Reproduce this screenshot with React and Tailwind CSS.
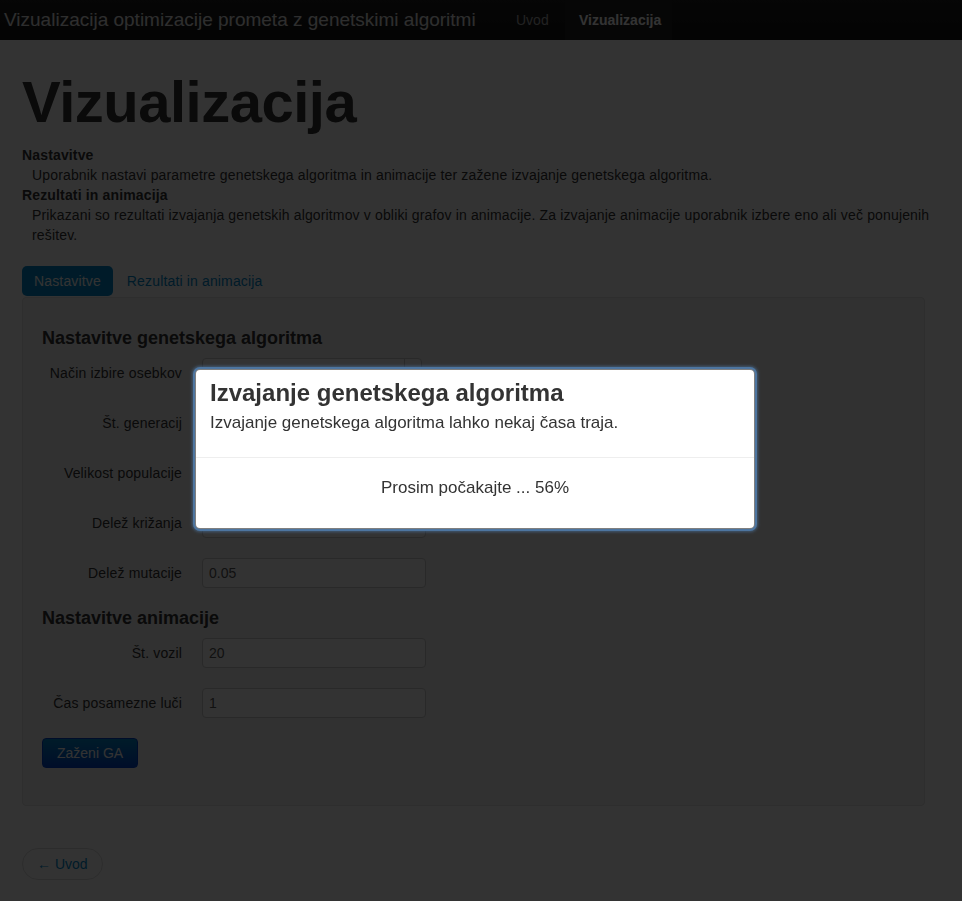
import React from 'react';

const font = { fontFamily: '"Liberation Sans", Arial, sans-serif' };

const genetic = [
  { label: 'Način izbire osebkov', value: 'Turnirska selekcija', select: true },
  { label: 'Št. generacij', value: '100' },
  { label: 'Velikost populacije', value: '50' },
  { label: 'Delež križanja', value: '0.8' },
  { label: 'Delež mutacije', value: '0.05' },
];

const animation = [
  { label: 'Št. vozil', value: '20' },
  { label: 'Čas posamezne luči', value: '1' },
];

const Field = ({ label, value, select }) => (
  <div className="flex items-start">
    <label className="w-[140px] pt-[5px] text-right text-[14px] leading-[20px] tracking-[0.15px] text-[#333]">{label}</label>
    {select ? (
      <div className="ml-[20px] flex h-[30px] w-[220px] items-center rounded-[4px] border border-[#ccc] bg-white text-[14px] text-[#333]">
        <span className="flex-1 px-[6px]">{value}</span>
        <span className="flex h-full w-[17px] items-center justify-center border-l border-[#ccc] text-[8px]">▼</span>
      </div>
    ) : (
      <input
        readOnly
        value={value}
        className="ml-[20px] h-[30px] w-[224px] rounded-[4px] border border-[#ccc] bg-white px-[6px] text-[14px] text-[#555] outline-none"
      />
    )}
  </div>
);

const Section = ({ title, fields }) => (
  <div className="flex flex-col">
    <h3 className="text-[18px] font-bold leading-[40px] text-[#333]">{title}</h3>
    <div className="flex flex-col gap-[20px]">
      {fields.map((f) => (
        <Field key={f.label} {...f} />
      ))}
    </div>
  </div>
);

export default function App() {
  return (
    <div className="min-h-[901px] bg-white text-[14px] text-[#333]" style={font}>
      {/* navbar */}
      <div className="flex h-[40px] items-center bg-gradient-to-b from-[#1e1e1e] to-[#141414]">
        <span className="w-[501px] pl-[4px] text-[19px] font-light text-[#e6e6e6]">
          Vizualizacija optimizacije prometa z genetskimi algoritmi
        </span>
        <nav className="flex h-full items-stretch">
          <a className="flex w-[64px] items-center pl-[15px] text-[14px] text-[#aaa]">Uvod</a>
          <a className="flex w-[107px] items-center bg-[#1f1f1f] pl-[14px] text-[14px] font-bold text-white">Vizualizacija</a>
        </nav>
      </div>

      <div className="px-[22px]">
        <h1 className="mt-[27px] mb-[8px] text-[58px] font-bold leading-[70px] tracking-[-0.5px] text-[#333]">
          Vizualizacija
        </h1>

        <dl className="leading-[20px] tracking-[0.15px]">
          <dt className="font-bold">Nastavitve</dt>
          <dd className="ml-[10px]">
            Uporabnik nastavi parametre genetskega algoritma in animacije ter zažene izvajanje genetskega algoritma.
          </dd>
          <dt className="font-bold">Rezultati in animacija</dt>
          <dd className="ml-[10px]">
            Prikazani so rezultati izvajanja genetskih algoritmov v obliki grafov in animacije. Za izvajanje animacije
            uporabnik izbere eno ali več ponujenih rešitev.
          </dd>
        </dl>

        {/* pills */}
        <div className="mt-[21px] mb-[1px] flex gap-[2px] tracking-[0.15px]">
          <a className="rounded-[5px] bg-[#0088cc] px-[12px] py-[8px] text-[14px] leading-[14px] text-white">Nastavitve</a>
          <a className="px-[12px] py-[8px] text-[14px] leading-[14px] text-[#0088cc]">Rezultati in animacija</a>
        </div>

        {/* well */}
        <div className="w-[903px] rounded-[4px] border border-[#e3e3e3] bg-[#f5f5f5] px-[19px] pt-[20px] pb-[37px]">
          <Section title="Nastavitve genetskega algoritma" fields={genetic} />
          <div className="mt-[10px]">
            <Section title="Nastavitve animacije" fields={animation} />
          </div>
          <button className="mt-[20px] h-[30px] rounded-[4px] border border-[#0044cc] bg-gradient-to-b from-[#0088cc] to-[#0044cc] px-[14px] text-[14px] text-white">
            Zaženi GA
          </button>
        </div>

        <div className="mt-[42px]">
          <a className="inline-flex h-[32px] items-center rounded-full border border-[#ddd] bg-white px-[14px] text-[14px] text-[#0088cc]">
            ← Uvod
          </a>
        </div>
      </div>

      {/* backdrop */}
      <div className="fixed inset-0 bg-black/80" />

      {/* modal */}
      <div className="fixed left-[193px] top-[367px] w-[564px] rounded-[7px] bg-[#4d75a0] p-[2px] shadow-[0_0_3px_1px_rgba(77,117,160,0.6)]">
        <div className="rounded-[5px] border border-black/50 bg-white">
          <div className="border-b border-[#eee] px-[14px] pt-[8px] pb-[9px]">
            <h3 className="text-[24px] font-bold leading-[30px] text-[#333]">Izvajanje genetskega algoritma</h3>
            <p className="mb-[10px] text-[17px] leading-[30px] text-[#333]">
              Izvajanje genetskega algoritma lahko nekaj časa traja.
            </p>
          </div>
          <div className="p-[15px]">
            <p className="mb-[10px] text-center text-[17px] leading-[30px] text-[#333]">Prosim počakajte ... 56%</p>
          </div>
        </div>
      </div>
    </div>
  );
}
